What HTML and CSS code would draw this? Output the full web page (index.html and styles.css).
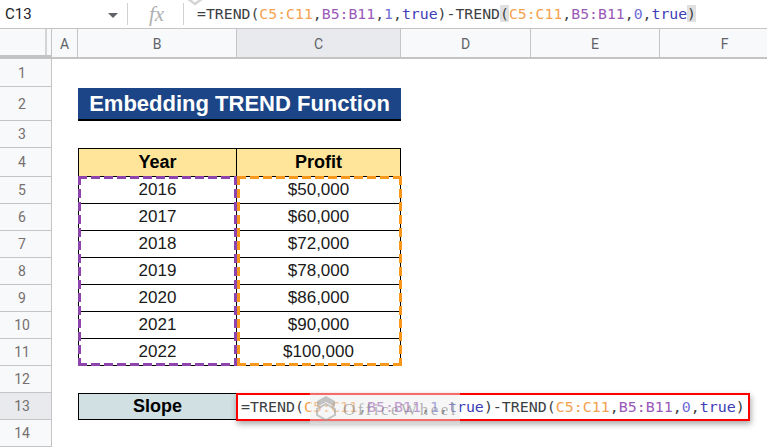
FILE: index.html
```html
<!DOCTYPE html>
<html>
<head>
<meta charset="utf-8">
<link rel="stylesheet" href="styles.css">
</head>
<body>
<div class="app">
  <div class="formula-bar">
    <svg class="wm-chevron" width="18" height="8" viewBox="0 0 18 8"><path d="M1 0 L9 6 L17 0" fill="none" stroke="#d4d4d4" stroke-width="2.5"/></svg>
    <div class="name-box">
      <span class="cell-ref">C13</span>
      <svg class="dropdown" width="10" height="5" viewBox="0 0 10 5"><path d="M0 0 H10 L5 5 Z" fill="#5f6368"/></svg>
    </div>
    <div class="sep"></div>
    <div class="fx">fx</div>
    <div class="sep"></div>
    <div class="formula"><span class="tx">=TREND(</span><span class="rc">C5:C11</span><span class="tx">,</span><span class="rb">B5:B11</span><span class="tx">,</span><span class="num">1</span><span class="tx">,</span><span class="bool">true</span><span class="tx">)-TREND</span><span class="hl">(</span><span class="rc">C5:C11</span><span class="tx">,</span><span class="rb">B5:B11</span><span class="tx">,</span><span class="num">0</span><span class="tx">,</span><span class="bool">true</span><span class="hl">)</span></div>
  </div>

  <div class="sheet">
    <!-- column headers -->
    <div class="corner"></div>
    <div class="ch">A</div>
    <div class="ch">B</div>
    <div class="ch ch-sel">C</div>
    <div class="ch">D</div>
    <div class="ch">E</div>
    <div class="ch">F</div>

    <!-- row 1 -->
    <div class="rh">1</div><div></div><div></div><div></div><div></div><div></div><div></div>

    <!-- row 2 -->
    <div class="rh">2</div><div></div>
    <div class="title">Embedding TREND Function</div>
    <div></div><div></div><div></div>

    <!-- row 3 -->
    <div class="rh">3</div><div></div><div></div><div></div><div></div><div></div><div></div>

    <!-- row 4 -->
    <div class="rh">4</div><div></div>
    <div class="th tb">Year</div>
    <div class="th tc">Profit</div>
    <div></div><div></div><div></div>

    <!-- rows 5-11 -->
    <div class="rh">5</div><div></div>
    <div class="td tb"><div class="sel sel-purple"></div>2016</div>
    <div class="td tc"><div class="sel sel-orange"></div>$50,000</div>
    <div></div><div></div><div></div>

    <div class="rh">6</div><div></div>
    <div class="td tb">2017</div><div class="td tc">$60,000</div>
    <div></div><div></div><div></div>

    <div class="rh">7</div><div></div>
    <div class="td tb">2018</div><div class="td tc">$72,000</div>
    <div></div><div></div><div></div>

    <div class="rh">8</div><div></div>
    <div class="td tb">2019</div><div class="td tc">$78,000</div>
    <div></div><div></div><div></div>

    <div class="rh">9</div><div></div>
    <div class="td tb">2020</div><div class="td tc">$86,000</div>
    <div></div><div></div><div></div>

    <div class="rh">10</div><div></div>
    <div class="td tb">2021</div><div class="td tc">$90,000</div>
    <div></div><div></div><div></div>

    <div class="rh">11</div><div></div>
    <div class="td tb">2022</div><div class="td tc">$100,000</div>
    <div></div><div></div><div></div>

    <!-- row 12 -->
    <div class="rh">12</div><div></div><div></div><div></div><div></div><div></div><div></div>

    <!-- row 13 -->
    <div class="rh rh-sel">13</div><div></div>
    <div class="slope">Slope</div>
    <div class="edit-cell">
      <div class="editor"><span class="tx">=TREND(</span><span class="rc">C5:C11</span><span class="tx">,</span><span class="rb">B5:B11</span><span class="tx">,</span><span class="num">1</span><span class="tx">,</span><span class="bool">true</span><span class="tx">)-TREND(</span><span class="rc">C5:C11</span><span class="tx">,</span><span class="rb">B5:B11</span><span class="tx">,</span><span class="num">0</span><span class="tx">,</span><span class="bool">true</span><span class="tx">)</span>
        <div class="watermark">
          <svg class="wm-logo" width="20" height="26" viewBox="0 0 20 26">
            <path d="M10 1 L19 6 L19 12 L10 7 L1 12 L1 6 Z" fill="#9a9a9a"/>
            <path d="M10 9 L19 14 L19 20 L10 25 L1 20 L1 14 Z" fill="none" stroke="#9a9a9a" stroke-width="2"/>
          </svg>
          <span class="wm-text">OfficeWheel</span>
        </div>
      </div>
    </div>
    <div></div><div></div><div></div>

    <!-- row 14 -->
    <div class="rh">14</div><div></div><div></div><div></div><div></div><div></div><div></div>
  </div>
</div>
</body>
</html>
```

FILE: styles.css
```css
* { box-sizing: border-box; }

html, body {
  margin: 0;
  padding: 0;
  background: #ffffff;
  overflow: hidden;
}

.app {
  width: 767px;
  height: 447px;
  overflow: hidden;
  font-family: "Liberation Sans", Arial, sans-serif;
}

/* ---------- formula bar ---------- */
.formula-bar {
  position: relative;
  display: flex;
  align-items: center;
  height: 29px;
  border-bottom: 1px solid #c4c4c4;
  background: #ffffff;
}

.wm-chevron {
  position: absolute;
  left: 186px;
  top: -2px;
}

.name-box {
  width: 127px;
  display: flex;
  align-items: center;
  justify-content: space-between;
  padding: 0 9px 0 5px;
  height: 100%;
}

.cell-ref {
  font-family: Roboto, "Liberation Sans", Arial, sans-serif;
  font-size: 15px;
  color: #202124;
}

.dropdown { margin-top: 2px; }

.sep {
  width: 1px;
  height: 22px;
  background: #d0d0d0;
}

.fx {
  width: 55px;
  text-align: center;
  font-family: "Liberation Serif", "Times New Roman", serif;
  font-style: italic;
  font-size: 21px;
  color: #b0b0b0;
  line-height: 28px;
  padding-left: 2px;
}

.formula {
  padding-left: 13px;
  font-family: "DejaVu Sans Mono", monospace;
  font-size: 14.8px;
  white-space: nowrap;
  line-height: 20px;
}

.tx { color: #3c4043; }
.rc { color: #f4a24f; }
.rb { color: #9b5ab8; }
.num { color: #6e6ed6; }
.bool { color: #3d3db5; }
.hl { color: #3c4043; background: #e0e0e0; }

/* ---------- sheet grid ---------- */
.sheet {
  display: grid;
  grid-template-columns: 52px 26px 159px 164px 130px 129px 130px;
  grid-template-rows: 30px 28px 34px 27px 29px repeat(7, 27px) 27px 27px 27px;
  font-size: 17px;
  color: #000;
}

.corner {
  background: linear-gradient(to right, transparent 45px, #d4d4d4 45px, #d4d4d4 47px, transparent 47px), #f8f9fa;
  border-right: 1px solid #c4c4c4;
  border-bottom: 4px solid #c4c4c4;
}

.ch {
  background: #f8f9fa;
  border-right: 1px solid #c4c4c4;
  border-bottom: 2px solid #c4c4c4;
  display: flex;
  align-items: center;
  justify-content: center;
  font-family: Roboto, "Liberation Sans", Arial, sans-serif;
  font-size: 14px;
  color: #5f6368;
  padding-top: 1px;
}
.ch-sel { background: #e8eaed; }

.rh {
  background: #f8f9fa;
  border-right: 1px solid #c4c4c4;
  border-bottom: 1px solid #c4c4c4;
  display: flex;
  align-items: center;
  justify-content: center;
  padding-right: 7px;
  font-family: Roboto, "Liberation Sans", Arial, sans-serif;
  font-size: 14px;
  color: #767070;
}
.rh-sel { background: #e8eaed; }

/* ---------- title ---------- */
.title {
  grid-column: span 2;
  margin-top: 1px;
  background: #1c4587;
  border-bottom: 2px solid #000;
  color: #ffffff;
  font-weight: bold;
  font-size: 22px;
  display: flex;
  align-items: center;
  justify-content: center;
  padding-top: 1px;
}

/* ---------- table ---------- */
.th, .td {
  position: relative;
  display: flex;
  align-items: center;
  justify-content: center;
  border-right: 1px solid #000;
  border-bottom: 1px solid #000;
}
.tb { border-left: 1px solid #000; }

.th {
  background: #ffe599;
  border-top: 1px solid #000;
  font-weight: bold;
  font-size: 18px;
}

.td {
  background: #ffffff;
  font-size: 17px;
  color: #1a1a1a;
}

.sel {
  position: absolute;
  top: -1px;
  height: 190px;
  pointer-events: none;
  z-index: 2;
  background-repeat: no-repeat;
  background-position: left top, left bottom, left top, right top;
  background-size: 100% 3px, 100% 3px, 3px 100%, 3px 100%;
}
.sel-purple {
  left: -1px;
  right: -1px;
  background-image:
    repeating-linear-gradient(to right, #8e44ad 0 9px, transparent 9px 13px),
    repeating-linear-gradient(to right, #8e44ad 0 9px, transparent 9px 13px),
    repeating-linear-gradient(to bottom, #8e44ad 0 9px, transparent 9px 13px),
    repeating-linear-gradient(to bottom, #8e44ad 0 9px, transparent 9px 13px);
}
.sel-orange {
  left: 0;
  right: -2px;
  background-image:
    repeating-linear-gradient(to right, #f7981d 0 9px, transparent 9px 13px),
    repeating-linear-gradient(to right, #f7981d 0 9px, transparent 9px 13px),
    repeating-linear-gradient(to bottom, #f7981d 0 9px, transparent 9px 13px),
    repeating-linear-gradient(to bottom, #f7981d 0 9px, transparent 9px 13px);
}

.slope {
  background: #d0e0e3;
  border: 1px solid #000;
  display: flex;
  align-items: center;
  justify-content: center;
  font-weight: bold;
  font-size: 18px;
}

/* ---------- cell editor ---------- */
.edit-cell {
  position: relative;
}

.editor {
  position: absolute;
  left: -1px;
  top: 0;
  height: 28px;
  padding: 0 3px;
  border: 2px solid #ff0000;
  background: #ffffff;
  box-shadow: 1px 3px 6px rgba(0, 0, 0, 0.35);
  font-family: "DejaVu Sans Mono", monospace;
  font-size: 14.95px;
  line-height: 24px;
  white-space: nowrap;
  z-index: 3;
}

.watermark {
  position: absolute;
  left: 72px;
  top: -3px;
  width: 150px;
  height: 32px;
  display: flex;
  align-items: center;
  gap: 7px;
  padding-left: 6px;
  background: rgba(235, 235, 235, 0.45);
}

.wm-logo { opacity: 0.55; }

.wm-text {
  font-family: "Liberation Serif", "Times New Roman", serif;
  font-size: 17px;
  letter-spacing: 2.5px;
  color: rgba(110, 110, 110, 0.5);
  padding-top: 4px;
}
```
